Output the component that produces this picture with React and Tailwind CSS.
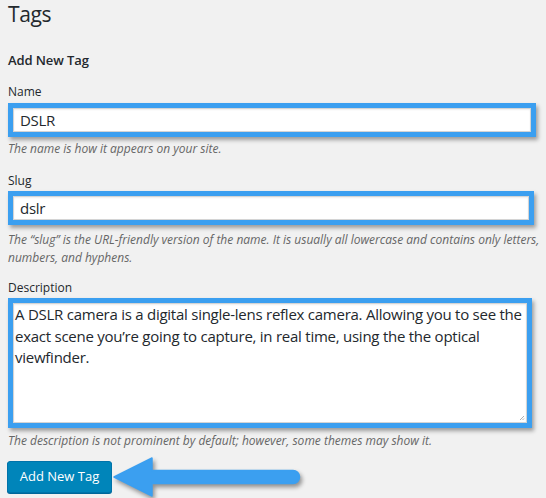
import React from "react";

const frame =
  "border-[5px] border-[#3b9ff0] shadow-[2px_3px_4px_rgba(0,0,0,0.35)]";
const field =
  "bg-white border border-[#d4d4d4] shadow-[inset_0_1px_2px_rgba(0,0,0,0.07)]";

function Arrow() {
  return (
    <svg
      width="192"
      height="44"
      viewBox="0 0 192 44"
      className="-my-[6px] drop-shadow-[2px_3px_2px_rgba(0,0,0,0.4)]"
    >
      <path
        d="M2 22 L40 3 L40 15.5 L181 15.5 A6.5 6.5 0 0 1 181 28.5 L40 28.5 L40 41 Z"
        fill="#3b9ff0"
        stroke="#3b9ff0"
        strokeWidth="1.5"
        strokeLinejoin="round"
      />
    </svg>
  );
}

export default function App() {
  return (
    <div className="w-[546px] h-[498px] overflow-hidden bg-[#f1f1f1] px-2 text-[#23282d] font-['Open_Sans','Segoe_UI',sans-serif]">
      <h1 className="text-[21px] leading-[28px] tracking-[-0.4px] font-normal">
        Tags
      </h1>

      <h2 className="mt-[23px] text-[13px] leading-[18px] tracking-[-0.1px] font-semibold">
        Add New Tag
      </h2>

      {/* name */}
      <div className="mt-[15px] text-[12px] leading-[16px]">Name</div>
      <div className={`mt-[3px] w-[528px] h-[34px] ${frame}`}>
        <div
          className={`h-full flex items-center px-[6px] text-[15px] tracking-[-0.3px] ${field}`}
        >
          DSLR
        </div>
      </div>
      <p className="mt-[3px] text-[12px] leading-[18px] italic text-[#666]">
        The name is how it appears on your site.
      </p>

      {/* slug */}
      <div className="mt-[15px] text-[12px] leading-[16px]">Slug</div>
      <div className={`mt-[2px] w-[526px] h-[34px] ${frame}`}>
        <div
          className={`h-full flex items-center px-[6px] text-[15px] tracking-[-0.3px] ${field}`}
        >
          dslr
        </div>
      </div>
      <p className="mt-[6px] text-[12px] leading-[18px] italic text-[#666] whitespace-nowrap">
        The “slug” is the URL-friendly version of the name. It is usually all
        lowercase and contains only letters,
        <br />
        numbers, and hyphens.
      </p>

      {/* description */}
      <div className="mt-[13px] text-[12px] leading-[16px]">Description</div>
      <div className={`mt-[2px] w-[524px] h-[130px] ${frame}`}>
        <div
          className={`relative h-full pl-[1px] text-[15px] leading-[21.5px] tracking-[-0.25px] whitespace-nowrap ${field}`}
        >
          A DSLR camera is a digital single-lens reflex camera. Allowing you to
          see the
          <br />
          exact scene you’re going to capture, in real time, using the the
          optical
          <br />
          viewfinder.
          <svg
            width="6"
            height="6"
            viewBox="0 0 6 6"
            className="absolute right-[1px] bottom-[1px]"
          >
            <path d="M5 1 L1 5 M5 3.5 L3.5 5" stroke="#999" strokeWidth="0.8" />
          </svg>
        </div>
      </div>
      <p className="mt-[4px] text-[12px] leading-[18px] italic text-[#666]">
        The description is not prominent by default; however, some themes may
        show it.
      </p>

      <div className="mt-[11px] flex items-center">
        <button className="-ml-[1px] w-[105px] h-[32px] rounded-[3px] bg-[#0085ba] border border-[#0073aa] shadow-[0_1px_0_#006799] text-white text-[13px]">
          Add New Tag
        </button>
        <Arrow />
      </div>
    </div>
  );
}
